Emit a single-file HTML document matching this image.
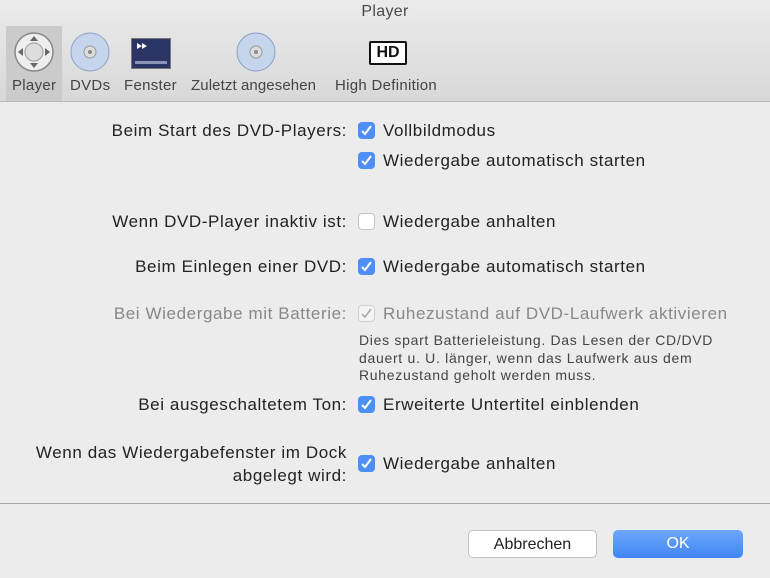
<!DOCTYPE html>
<html><head><style>
body{margin:0;width:770px;height:578px;background:#ececec;font-family:"Liberation Sans",sans-serif;position:relative;overflow:hidden;color:#222}
.tb{position:absolute;left:0;top:0;width:770px;height:101px;background:linear-gradient(#ebebeb,#d8d8d8);border-bottom:1px solid #b8b8b8}
.title{position:absolute;top:3px;left:0;width:770px;text-align:center;font-size:16px;color:#4a4a4a;letter-spacing:0.3px}
.sel{position:absolute;left:6px;top:26px;width:56px;height:75px;background:#cbcbcb}
.tl{position:absolute;top:77px;font-size:15px;color:#444;letter-spacing:0.3px;white-space:nowrap}
.ic{position:absolute}
.lab{position:absolute;right:423px;font-size:17px;letter-spacing:0.6px;text-align:right;white-space:nowrap}
.cb{position:absolute;left:358px;width:17px;height:17px;border-radius:4px;background:#4d8ff5;box-sizing:border-box}
.cb svg{position:absolute;left:2px;top:2px}
.cb.off{background:#fff;border:1px solid #c4c4c4}
.cb.dis{background:#f4f4f4;border:1px solid #d0d0d0}
.t{position:absolute;left:383px;font-size:17px;letter-spacing:0.6px;white-space:nowrap}
.small{position:absolute;left:359px;font-size:14px;letter-spacing:0.7px;line-height:17.5px;color:#444;white-space:nowrap}
.line{position:absolute;left:0;top:503px;width:770px;height:1px;background:#a8a8a8}
.btn{position:absolute;top:530px;height:28px;border-radius:5px;font-size:16px;text-align:center;line-height:28px;box-sizing:border-box}
</style></head><body>
<div class="tb">
<div class="title">Player</div>
<div class="sel"></div>
<svg class="ic" style="left:13px;top:31px" width="42" height="42"><circle cx="21" cy="21" r="19" fill="#eee" stroke="#888" stroke-width="1.5"/><circle cx="21" cy="21" r="9" fill="#ddd" stroke="#999"/><path d="M21 5l-4 5h8zM21 37l-4-5h8zM5 21l5-4v8zM37 21l-5-4v8z" fill="#666"/></svg>
<svg class="ic" style="left:70px;top:32px" width="40" height="40"><circle cx="20" cy="20" r="19" fill="#c6d4ec" stroke="#8da0c6"/><circle cx="20" cy="20" r="6" fill="#ddd" stroke="#999"/><circle cx="20" cy="20" r="2" fill="#888"/></svg>
<svg class="ic" style="left:131px;top:38px" width="40" height="31"><rect x="0.5" y="0.5" width="39" height="30" fill="#2a3566" stroke="#777"/><path d="M6 5l5 3-5 3zM11 5l5 3-5 3z" fill="#fff"/><rect x="4" y="23" width="32" height="3" fill="#8a94b8"/></svg>
<svg class="ic" style="left:236px;top:32px" width="40" height="40"><circle cx="20" cy="20" r="19" fill="#c6d4ec" stroke="#8da0c6"/><circle cx="20" cy="20" r="6" fill="#ddd" stroke="#999"/><circle cx="20" cy="20" r="2" fill="#888"/></svg>
<div class="ic" style="left:369px;top:41px;width:34px;height:20px;border:2px solid #111;border-radius:2px;background:#fff;font-weight:bold;font-size:16px;line-height:20px;text-align:center;color:#111">HD</div>
<div class="tl" style="left:12px">Player</div>
<div class="tl" style="left:70px">DVDs</div>
<div class="tl" style="left:124px">Fenster</div>
<div class="tl" style="left:191px;letter-spacing:0.1px">Zuletzt angesehen</div>
<div class="tl" style="left:335px">High Definition</div>
</div>

<div class="lab" style="top:121px">Beim Start des DVD-Players:</div>
<div class="cb" style="top:122px"><svg width="13" height="13"><path d="M2 7l3 3 6-8" stroke="#fff" stroke-width="2" fill="none"/></svg></div>
<div class="t" style="top:121px">Vollbildmodus</div>
<div class="cb" style="top:152px"><svg width="13" height="13"><path d="M2 7l3 3 6-8" stroke="#fff" stroke-width="2" fill="none"/></svg></div>
<div class="t" style="top:151px">Wiedergabe automatisch starten</div>

<div class="lab" style="top:212px">Wenn DVD-Player inaktiv ist:</div>
<div class="cb off" style="top:213px"></div>
<div class="t" style="top:212px">Wiedergabe anhalten</div>

<div class="lab" style="top:257px">Beim Einlegen einer DVD:</div>
<div class="cb" style="top:258px"><svg width="13" height="13"><path d="M2 7l3 3 6-8" stroke="#fff" stroke-width="2" fill="none"/></svg></div>
<div class="t" style="top:257px">Wiedergabe automatisch starten</div>

<div class="lab" style="top:304px;color:#888">Bei Wiedergabe mit Batterie:</div>
<div class="cb dis" style="top:305px"><svg width="13" height="13" style="left:1px;top:1px"><path d="M2 7l3 3 6-8" stroke="#aaa" stroke-width="1.6" fill="none"/></svg></div>
<div class="t" style="top:304px;color:#888">Ruhezustand auf DVD-Laufwerk aktivieren</div>
<div class="small" style="top:332px">Dies spart Batterieleistung. Das Lesen der CD/DVD<br>dauert u. U. länger, wenn das Laufwerk aus dem<br>Ruhezustand geholt werden muss.</div>

<div class="lab" style="top:395px">Bei ausgeschaltetem Ton:</div>
<div class="cb" style="top:396px"><svg width="13" height="13"><path d="M2 7l3 3 6-8" stroke="#fff" stroke-width="2" fill="none"/></svg></div>
<div class="t" style="top:395px">Erweiterte Untertitel einblenden</div>

<div class="lab" style="top:441px;line-height:23px">Wenn das Wiedergabefenster im Dock<br>abgelegt wird:</div>
<div class="cb" style="top:455px"><svg width="13" height="13"><path d="M2 7l3 3 6-8" stroke="#fff" stroke-width="2" fill="none"/></svg></div>
<div class="t" style="top:454px">Wiedergabe anhalten</div>

<div class="line"></div>
<div class="btn" style="left:468px;width:129px;background:#fff;border:1px solid #c2c2c2;color:#222">Abbrechen</div>
<div class="btn" style="left:613px;width:130px;background:linear-gradient(#6fa8fb,#3f85f3);color:#fff">OK</div>
</body></html>
